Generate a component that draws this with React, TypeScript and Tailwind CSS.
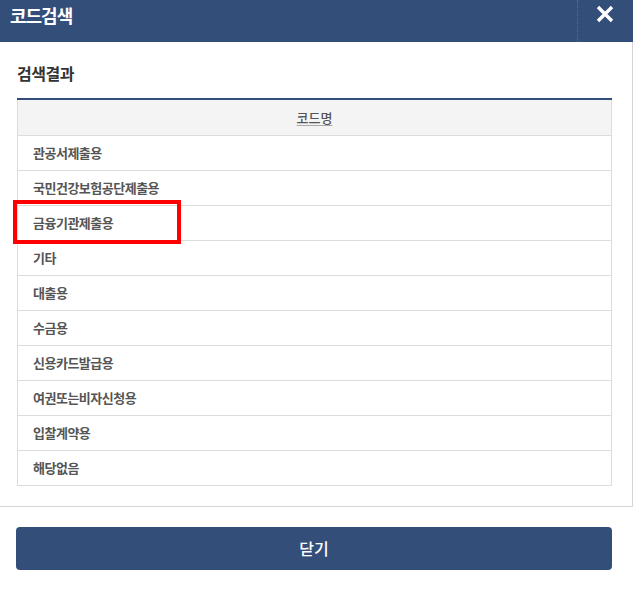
const rows = [
  "관공서제출용",
  "국민건강보험공단제출용",
  "금융기관제출용",
  "기타",
  "대출용",
  "수금용",
  "신용카드발급용",
  "여권또는비자신청용",
  "입찰계약용",
  "해당없음",
];

export default function App() {
  return (
    <div
      className="relative w-[633px] h-[594px] bg-white overflow-hidden"
      style={{ fontFamily: '"Noto Sans CJK KR", "Noto Sans", sans-serif' }}
    >
      {/* header */}
      <div className="flex h-[42px] items-center bg-[#344e7a]">
        <h1 className="flex-1 pl-[10px] pb-[12px] text-[18px] font-bold tracking-[-1px] text-white">
          코드검색
        </h1>
        <div className="flex h-full w-[56px] items-start border-l border-dotted border-[#5a6f95]">
          <button className="ml-[18px] mt-[5px] text-white">
            <svg width="18" height="18" viewBox="0 0 18 18">
              <path d="M2 2 L16 16 M16 2 L2 16" stroke="white" strokeWidth="3.4" />
            </svg>
          </button>
        </div>
      </div>

      {/* result panel */}
      <div className="w-[633px] border-r border-b border-[#d5d5d5] pl-[17px] pr-[20px] pb-[20px]">
        <h2 className="pt-[20px] pb-[14px] text-[16px] font-semibold leading-[22px] tracking-[-0.5px] text-[#333]">
          검색결과
        </h2>
        <table className="w-full border-collapse border-t-2 border-t-[#344e7a] text-[13px] text-[#555]">
          <thead>
            <tr className="h-[36px] bg-[#f4f4f4]">
              <th className="border border-t-0 border-[#dcdcdc] font-medium">
                <span className="underline underline-offset-2 decoration-[#aaa]">코드명</span>
              </th>
            </tr>
          </thead>
          <tbody>
            {rows.map((r) => (
              <tr key={r} className="h-[35px]">
                <td className="border border-[#dcdcdc] pl-[15px] font-semibold tracking-[-0.5px]">
                  {r}
                </td>
              </tr>
            ))}
          </tbody>
        </table>
      </div>

      {/* footer */}
      <div className="pl-[16px] pr-[21px] pt-[20px]">
        <button className="h-[43px] w-full rounded-[4px] bg-[#344e7a] text-[16px] font-medium text-white">
          닫기
        </button>
      </div>

      {/* highlight */}
      <div className="absolute left-[13px] top-[200px] h-[44px] w-[168px] border-[4px] border-[#ff0000]" />
    </div>
  );
}
